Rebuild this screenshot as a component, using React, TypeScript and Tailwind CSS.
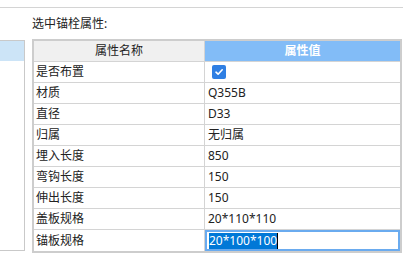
const rows: { name: string; value: string }[] = [
  { name: "是否布置", value: "" },
  { name: "材质", value: "Q355B" },
  { name: "直径", value: "D33" },
  { name: "归属", value: "无归属" },
  { name: "埋入长度", value: "850" },
  { name: "弯钩长度", value: "150" },
  { name: "伸出长度", value: "150" },
  { name: "盖板规格", value: "20*110*110" },
  { name: "锚板规格", value: "20*100*100" },
];

function CheckBox() {
  return (
    <span className="flex h-[14px] w-[14px] items-center justify-center rounded-[2px] bg-[#2f7fe3]">
      <svg width="10" height="10" viewBox="0 0 10 10">
        <path
          d="M2 5.2 L4.1 7.2 L8.2 2.8"
          fill="none"
          stroke="white"
          strokeWidth="1.6"
          strokeLinecap="round"
          strokeLinejoin="round"
        />
      </svg>
    </span>
  );
}

export default function App() {
  return (
    <div
      className="h-[258px] w-[418px] overflow-hidden bg-white text-[12px] text-[#222]"
      style={{ fontFamily: '"Noto Sans", "Noto Sans CJK SC", sans-serif' }}
    >
      <div className="h-[8px] w-[403px] border-b border-[#d4d4d4]" />
      <div className="flex">
        <div className="pt-[32px]">
          <div className="h-[211px] w-[25px] border-y border-r border-[#c9c9c9]">
            <div className="h-[20px] w-[24px] bg-[#cce4f7]" />
          </div>
        </div>
        <div className="ml-[7px] flex flex-col">
          <div className="flex h-[31px] items-center leading-none">选中锚栓属性:</div>
          <div className="w-[370px] border-2 border-[#cdcdcd]">
            <div className="flex h-[21px] border-b border-[#d4d4d4] leading-none">
              <div className="flex w-[171px] items-center justify-center border-r border-[#d4d4d4] bg-[#f0f0f0]">
                属性名称
              </div>
              <div className="flex flex-1 items-center justify-center bg-[#82bcf7] font-bold text-white">
                属性值
              </div>
            </div>
            {rows.map((r, i) => {
              const last = i === rows.length - 1;
              return (
                <div
                  key={r.name}
                  className={`flex h-[21px] leading-none ${last ? "h-[20px]" : "border-b border-[#d4d4d4]"}`}
                >
                  <div className="flex w-[171px] items-center border-r border-[#d4d4d4] pl-[2px]">
                    {r.name}
                  </div>
                  {i === 0 ? (
                    <div className="flex flex-1 items-center pl-[7px]">
                      <CheckBox />
                    </div>
                  ) : last ? (
                    <div className="flex flex-1 items-center border-2 border-[#6aabef] pl-[2px]">
                      <span className="flex h-[16px] items-center bg-[#0078d7] text-white">{r.value}</span>
                      <span className="h-[16px] w-px bg-black" />
                    </div>
                  ) : (
                    <div className="flex flex-1 items-center pl-[3px]">{r.value}</div>
                  )}
                </div>
              );
            })}
          </div>
        </div>
      </div>
    </div>
  );
}
